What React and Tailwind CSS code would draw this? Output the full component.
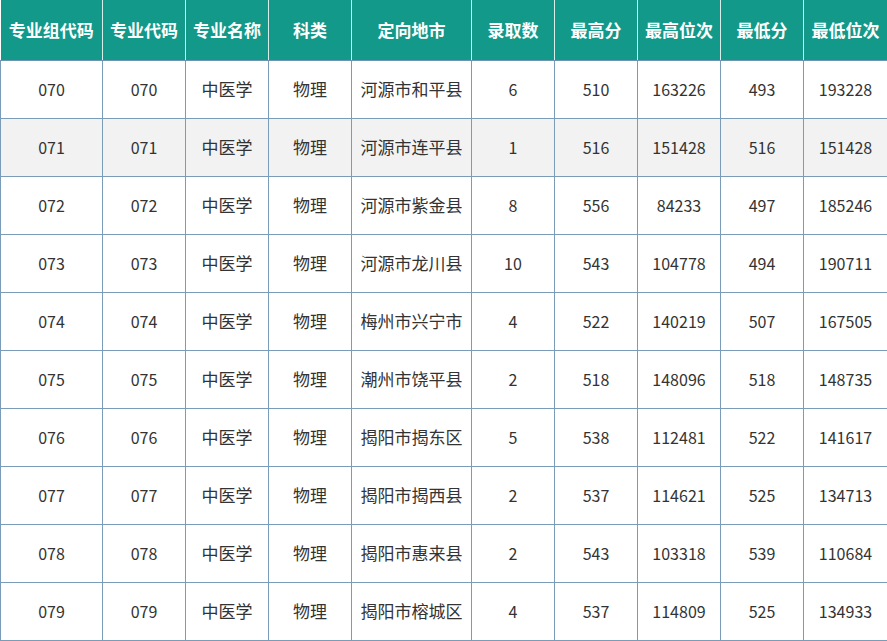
import React from "react";

const headers = [
  "专业组代码",
  "专业代码",
  "专业名称",
  "科类",
  "定向地市",
  "录取数",
  "最高分",
  "最高位次",
  "最低分",
  "最低位次",
];

const widths = [102, 83, 83, 83, 120, 83, 83, 83, 83, 84];

const rows = [
  ["070", "070", "中医学", "物理", "河源市和平县", "6", "510", "163226", "493", "193228"],
  ["071", "071", "中医学", "物理", "河源市连平县", "1", "516", "151428", "516", "151428"],
  ["072", "072", "中医学", "物理", "河源市紫金县", "8", "556", "84233", "497", "185246"],
  ["073", "073", "中医学", "物理", "河源市龙川县", "10", "543", "104778", "494", "190711"],
  ["074", "074", "中医学", "物理", "梅州市兴宁市", "4", "522", "140219", "507", "167505"],
  ["075", "075", "中医学", "物理", "潮州市饶平县", "2", "518", "148096", "518", "148735"],
  ["076", "076", "中医学", "物理", "揭阳市揭东区", "5", "538", "112481", "522", "141617"],
  ["077", "077", "中医学", "物理", "揭阳市揭西县", "2", "537", "114621", "525", "134713"],
  ["078", "078", "中医学", "物理", "揭阳市惠来县", "2", "543", "103318", "539", "110684"],
  ["079", "079", "中医学", "物理", "揭阳市榕城区", "4", "537", "114809", "525", "134933"],
];

// columns holding Chinese text are set a touch larger, like the source
const cjkCols = [2, 3, 4];

const App = () => {
  return (
    <div className="w-[887px] h-[641px] bg-white overflow-hidden font-['Microsoft_YaHei','Noto_Sans_CJK_SC',sans-serif]">
      <table className="table-fixed border-collapse w-[887px]">
        <colgroup>
          {widths.map((w, i) => (
            <col key={i} style={{ width: w }} />
          ))}
        </colgroup>
        <thead>
          <tr className="h-[60px] bg-[#12998a]">
            {headers.map((h, i) => (
              <th
                key={i}
                className="p-0 text-[17px] font-bold text-white text-center border-x border-b border-x-[#d5eeea] border-b-[#6f95b4] first:border-l-0"
              >
                {h}
              </th>
            ))}
          </tr>
        </thead>
        <tbody>
          {rows.map((r, ri) => (
            <tr
              key={ri}
              className={ri === 1 ? "h-[58px] bg-[#f2f2f2]" : "h-[58px] bg-white"}
            >
              {r.map((c, ci) => (
                <td
                  key={ci}
                  className={
                    cjkCols.includes(ci)
                      ? "p-0 text-[17px] text-[#333333] text-center border border-[#7b9cb9]"
                      : "p-0 text-[16px] text-[#333333] text-center border border-[#7b9cb9]"
                  }
                >
                  {c}
                </td>
              ))}
            </tr>
          ))}
        </tbody>
      </table>
    </div>
  );
};

export default App;
